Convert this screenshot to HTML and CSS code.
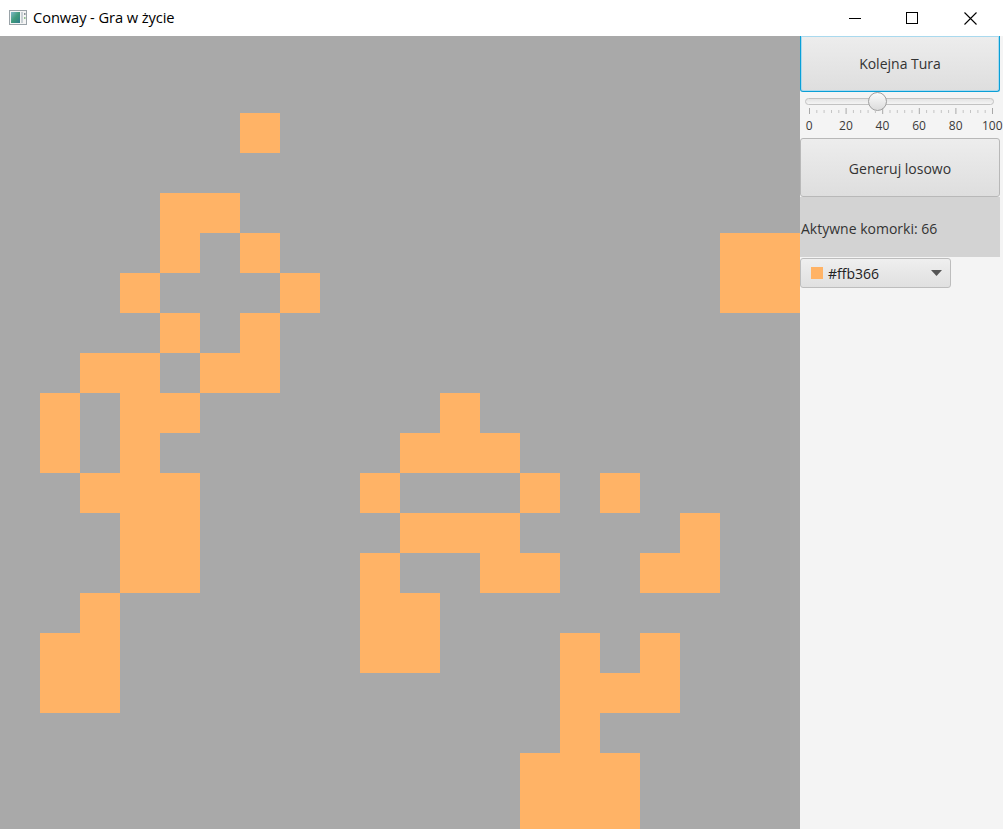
FILE: index.html
```html
<!DOCTYPE html>
<html lang="pl">
<head>
<meta charset="utf-8">
<title>Conway - Gra w życie</title>
<link rel="stylesheet" href="styles.css">
</head>
<body>
<div class="window">
  <header class="titlebar">
    <svg class="app-icon" width="18" height="15" viewBox="0 0 18 15">
      <defs>
        <linearGradient id="ig" x1="0" y1="0" x2="1" y2="1">
          <stop offset="0" stop-color="#7fb7c9"/>
          <stop offset="0.5" stop-color="#3f9a7a"/>
          <stop offset="1" stop-color="#2d7a8c"/>
        </linearGradient>
      </defs>
      <rect x="0.5" y="0.5" width="17" height="14" fill="#f4f4f4" stroke="#9aa3a8"/>
      <rect x="2" y="2" width="9" height="11" fill="url(#ig)"/>
      <rect x="12" y="2" width="2" height="11" fill="#c9d0d4"/>
      <rect x="15" y="3" width="1.5" height="2" fill="#8a9399"/>
      <rect x="15" y="7" width="1.5" height="2" fill="#8fbf8f"/>
    </svg>
    <span class="title">Conway - Gra w życie</span>
    <div class="controls">
      <span class="ctl"><svg width="12" height="12" viewBox="0 0 12 12"><line x1="0" y1="6.5" x2="12" y2="6.5" stroke="#000" stroke-width="1"/></svg></span>
      <span class="ctl"><svg width="12" height="12" viewBox="0 0 12 12"><rect x="0.5" y="0.5" width="11" height="11" fill="none" stroke="#000" stroke-width="1"/></svg></span>
      <span class="ctl"><svg width="13" height="13" viewBox="0 0 13 13"><path d="M0.5 0.5 L12.5 12.5 M12.5 0.5 L0.5 12.5" stroke="#000" stroke-width="1.1" fill="none"/></svg></span>
    </div>
  </header>
  <main class="content">
    <div class="board">
      <svg class="cells" width="800" height="793" viewBox="0 3 800 793" shape-rendering="crispEdges">
        <rect x="0" y="0" width="800" height="800" fill="#a9a9a9"/>
        <g fill="#ffb366" id="live"></g>
      </svg>
    </div>
    <aside class="panel">
      <button class="btn btn-focused">Kolejna Tura</button>
      <div class="slider">
        <div class="track"></div>
        <div class="thumb"></div>
        <svg class="ticks" width="200" height="7" viewBox="0 0 200 7" id="ticks"></svg>
        <div class="tick-labels">
          <span>0</span><span>20</span><span>40</span><span>60</span><span>80</span><span>100</span>
        </div>
      </div>
      <button class="btn btn-gen">Generuj losowo</button>
      <div class="status">Aktywne komorki: 66</div>
      <div class="combo">
        <span class="swatch"></span>
        <span class="combo-text">#ffb366</span>
        <svg class="arrow" width="11" height="6" viewBox="0 0 11 6"><path d="M0 0 H11 L5.5 6 Z" fill="#555"/></svg>
      </div>
    </aside>
  </main>
</div>
<script src="script.js"></script>
</body>
</html>
```

FILE: script.js
```js
(function () {
  var live = {
    2: [6],
    4: [4, 5],
    5: [4, 6, 18, 19],
    6: [3, 7, 18, 19],
    7: [4, 6],
    8: [2, 3, 5, 6],
    9: [1, 3, 4, 11],
    10: [1, 3, 10, 11, 12],
    11: [2, 3, 4, 9, 13, 15],
    12: [3, 4, 10, 11, 12, 17],
    13: [3, 4, 9, 12, 13, 16, 17],
    14: [2, 9, 10],
    15: [1, 2, 9, 10, 14, 16],
    16: [1, 2, 14, 15, 16],
    17: [14],
    18: [13, 14, 15],
    19: [13, 14, 15]
  };
  var ns = "http://www.w3.org/2000/svg";
  var g = document.getElementById("live");
  Object.keys(live).forEach(function (r) {
    live[r].forEach(function (c) {
      var rect = document.createElementNS(ns, "rect");
      rect.setAttribute("x", c * 40);
      rect.setAttribute("y", r * 40);
      rect.setAttribute("width", 40);
      rect.setAttribute("height", 40);
      g.appendChild(rect);
    });
  });
  var t = document.getElementById("ticks");
  for (var j = 0; j <= 25; j++) {
    var x = 9.5 + j * 7.32;
    var major = j % 5 === 0;
    var l = document.createElementNS(ns, "line");
    l.setAttribute("x1", x.toFixed(1));
    l.setAttribute("x2", x.toFixed(1));
    l.setAttribute("y1", major ? 0 : 2);
    l.setAttribute("y2", major ? 6 : 5);
    l.setAttribute("stroke", major ? "#a8a8a8" : "#c4c4c4");
    l.setAttribute("stroke-width", "1");
    t.appendChild(l);
  }
})();
```

FILE: styles.css
```css
* { box-sizing: border-box; }
html, body { margin: 0; padding: 0; }
body {
  width: 1003px;
  height: 829px;
  overflow: hidden;
  font-family: "Open Sans", "Noto Sans", "Liberation Sans", sans-serif;
  background: #f4f4f4;
}
.window {
  display: flex;
  flex-direction: column;
  width: 1003px;
  height: 829px;
}
.titlebar {
  height: 36px;
  flex: none;
  background: #ffffff;
  display: flex;
  align-items: center;
  padding-left: 9px;
  padding-bottom: 2px;
}
.app-icon { flex: none; }
.title {
  margin-left: 6px;
  font-size: 14.7px;
  color: #000;
  letter-spacing: -0.1px;
}
.controls {
  margin-left: auto;
  display: flex;
  height: 100%;
}
.ctl {
  width: 58px;
  display: flex;
  align-items: center;
  justify-content: center;
  margin-top: 2px;
}
.ctl:first-child { width: 56px; }
.ctl:last-child { width: 62px; padding-right: 4px; }
.content {
  flex: 1;
  display: flex;
  min-height: 0;
}
.board {
  width: 800px;
  flex: none;
  overflow: hidden;
  background: #a9a9a9;
}
.cells { display: block; }
.panel {
  width: 203px;
  flex: none;
  background: #f4f4f4;
  display: flex;
  flex-direction: column;
  overflow: hidden;
}
.btn {
  width: 200px;
  font-family: inherit;
  font-size: 14px;
  color: #333333;
  background: linear-gradient(#ededed, #dedede);
  border: 1px solid #b8b8b8;
  border-radius: 3px;
  padding: 0;
  margin: 0;
}
.btn-focused {
  height: 56px;
  border: 1px solid #0a9fd6;
  border-top-width: 0;
  border-radius: 0 0 3px 3px;
  box-shadow: inset 0 0 0 1px #a9d9ee;
  padding-top: 0;
}
.btn-gen {
  height: 59px;
  padding-top: 1px;
}
.slider {
  position: relative;
  height: 46px;
  width: 200px;
}
.track {
  position: absolute;
  left: 5px;
  top: 6px;
  width: 189px;
  height: 7px;
  border: 1px solid #c2c2c2;
  border-radius: 4px;
  background: linear-gradient(#e4e4e4, #f4f4f4);
}
.thumb {
  position: absolute;
  left: 68px;
  top: 0px;
  width: 19px;
  height: 19px;
  border-radius: 50%;
  border: 1px solid #9f9f9f;
  background: linear-gradient(#fbfbfb, #dcdcdc);
}
.ticks {
  position: absolute;
  left: 0;
  top: 16px;
}
.tick-labels {
  position: absolute;
  left: -9px;
  top: 26px;
  display: grid;
  grid-template-columns: repeat(6, 36.6px);
  font-size: 12px;
  color: #3a3a3a;
  line-height: 16px;
}
.tick-labels span {
  text-align: center;
  white-space: nowrap;
}
.status {
  width: 200px;
  height: 60px;
  background: #d3d3d3;
  display: flex;
  align-items: center;
  padding-left: 1px;
  padding-top: 2px;
  font-size: 14px;
  color: #333333;
  white-space: nowrap;
}
.combo {
  margin-top: 1px;
  width: 151px;
  height: 30px;
  border: 1px solid #bdbdbd;
  border-radius: 3px;
  background: linear-gradient(#efefef, #e0e0e0);
  display: flex;
  align-items: center;
  padding-left: 10px;
  padding-right: 8px;
}
.swatch {
  width: 12px;
  height: 12px;
  background: #ffb366;
  flex: none;
}
.combo-text {
  margin-left: 5px;
  font-size: 14px;
  color: #222;
}
.arrow {
  margin-left: auto;
}
```
